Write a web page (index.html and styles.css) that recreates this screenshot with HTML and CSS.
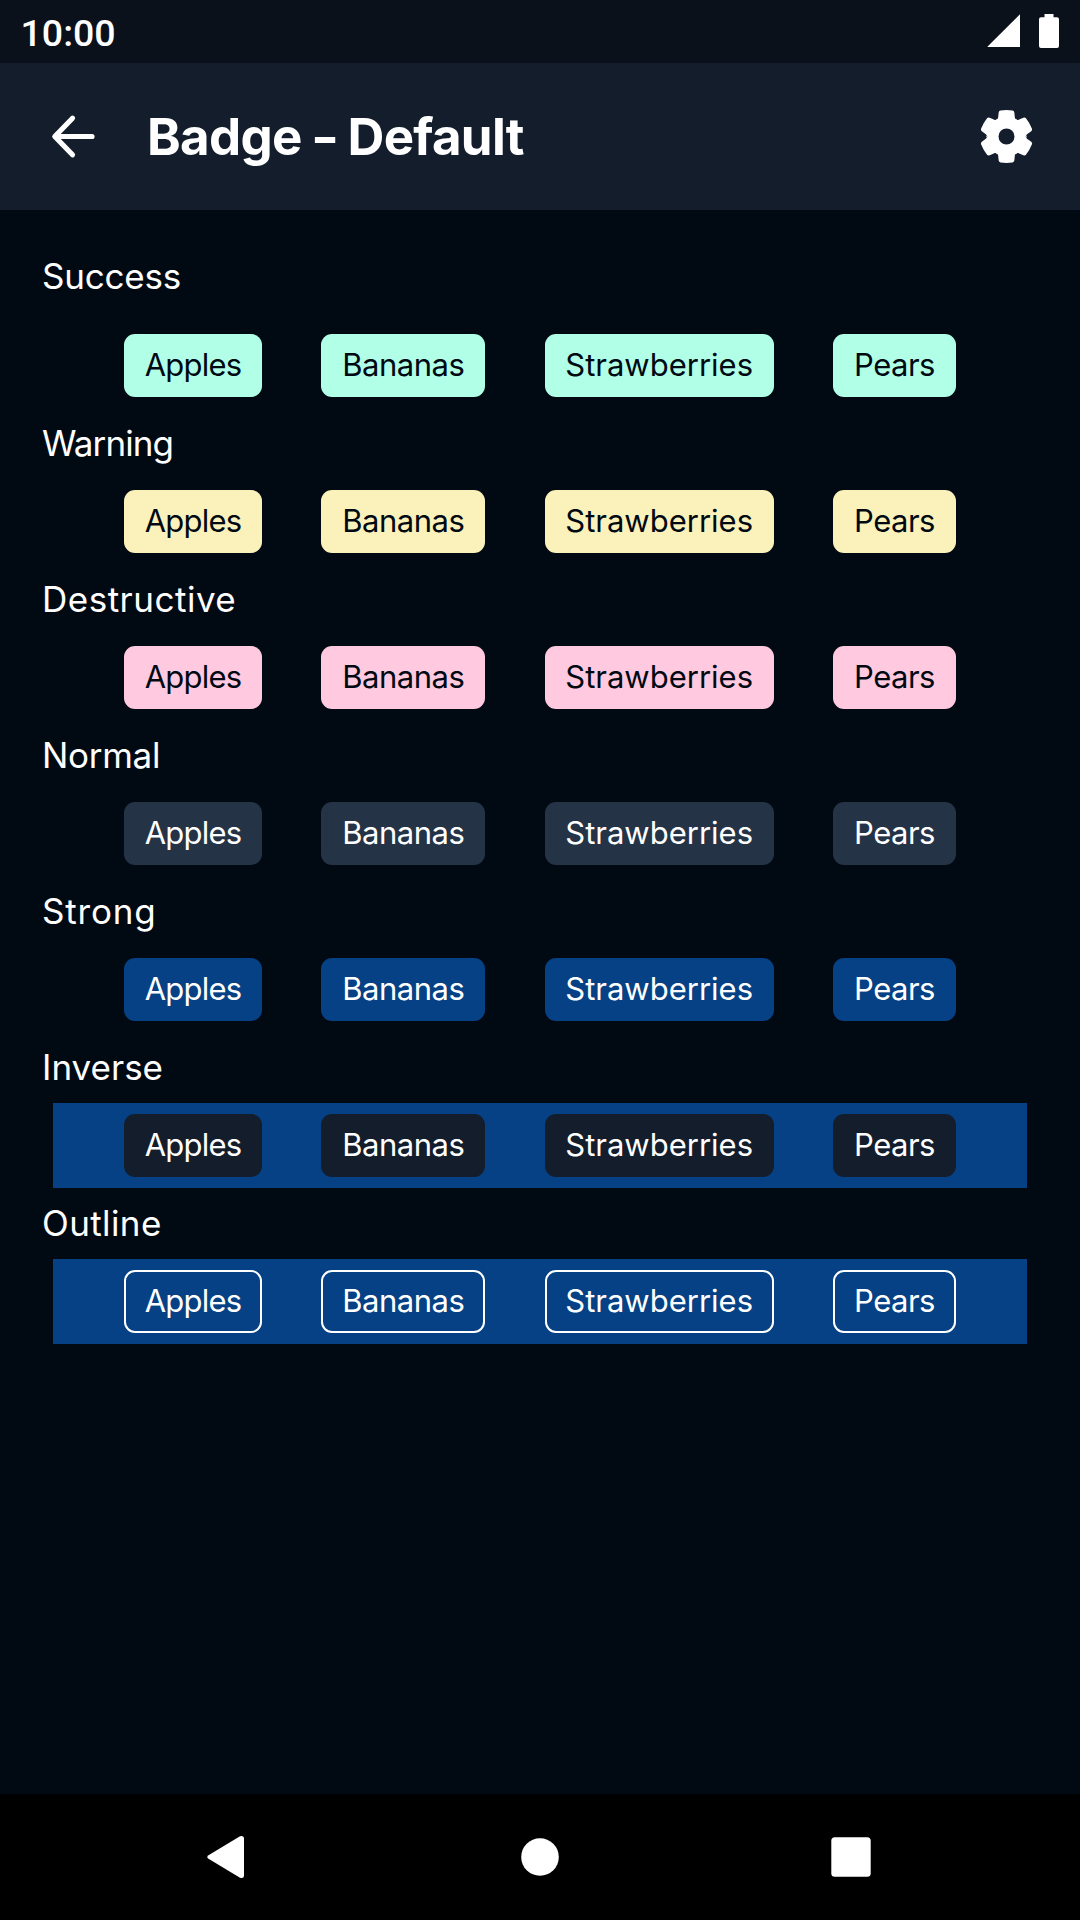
FILE: index.html
```html
<!DOCTYPE html>
<html lang="en">
<head>
<meta charset="utf-8">
<title>Badge - Default</title>
<link rel="stylesheet" href="styles.css">
</head>
<body>
<div class="status">
  <span class="time">10:00</span>
  <svg class="status-icons" width="72" height="36" viewBox="0 0 72 36"><path d="M.6 33V32.500L33 .3V33z"/><path d="M57.500 0h9v3.200h3.500q2 0 2 2v26.800q0 2-2 2h-16q-2 0-2-2V5.200q0-2 2-2h3.500z"/></svg>
</div>
<header class="appbar">
  <svg class="back" width="44" height="44" viewBox="0 0 44 44"><path d="M41 21.500H4M21.500 3.200L3.800 21.500l17.700 18.300"/></svg>
  <h1 class="title">Badge <span class="dash">-</span> Default</h1>
  <svg class="gear" width="54" height="54" viewBox="-82.5 -79.5 162 162">
    <defs><path id="tooth" d="M-22 -38L-30.750 -53.300C-26 -50.500 -24.800 -55 -24.500 -62L-23.500 -72Q-22.500 -77 -18 -77.800Q0 -80.500 18 -77.800Q22.500 -77 23.500 -72L24.500 -62C24.800 -55 26 -50.500 30.750 -53.300L22 -38z"/></defs>
    <circle class="ring" r="40"/>
    <use href="#tooth"/><use href="#tooth" transform="rotate(60)"/><use href="#tooth" transform="rotate(120)"/><use href="#tooth" transform="rotate(180)"/><use href="#tooth" transform="rotate(240)"/><use href="#tooth" transform="rotate(300)"/>
  </svg>
</header>
<main class="content">
  <h2 class="label label-first l-success">Success</h2>
  <div class="row success"><span class="badge apples">Apples</span><span class="badge bananas">Bananas</span><span class="badge strawberries">Strawberries</span><span class="badge pears">Pears</span></div>
  <h2 class="label l-warning">Warning</h2>
  <div class="row warning"><span class="badge apples">Apples</span><span class="badge bananas">Bananas</span><span class="badge strawberries">Strawberries</span><span class="badge pears">Pears</span></div>
  <h2 class="label l-destructive">Destructive</h2>
  <div class="row destructive"><span class="badge apples">Apples</span><span class="badge bananas">Bananas</span><span class="badge strawberries">Strawberries</span><span class="badge pears">Pears</span></div>
  <h2 class="label l-normal">Normal</h2>
  <div class="row normal"><span class="badge apples">Apples</span><span class="badge bananas">Bananas</span><span class="badge strawberries">Strawberries</span><span class="badge pears">Pears</span></div>
  <h2 class="label l-strong">Strong</h2>
  <div class="row strong"><span class="badge apples">Apples</span><span class="badge bananas">Bananas</span><span class="badge strawberries">Strawberries</span><span class="badge pears">Pears</span></div>
  <h2 class="label">Inverse</h2>
  <div class="row inverse"><span class="badge apples">Apples</span><span class="badge bananas">Bananas</span><span class="badge strawberries">Strawberries</span><span class="badge pears">Pears</span></div>
  <h2 class="label l-outline">Outline</h2>
  <div class="row outline"><span class="badge apples">Apples</span><span class="badge bananas">Bananas</span><span class="badge strawberries">Strawberries</span><span class="badge pears">Pears</span></div>
</main>
<nav class="navbar">
  <svg width="38" height="44" viewBox="0 0 38 44"><path d="M1.500 20.200L33 1.300Q37 0 37 3.500V40.500Q37 44 33 42.700L1.500 23.800Q-1 22 1.500 20.200z"/></svg>
  <svg class="home" width="38" height="38" viewBox="0 0 38 38"><circle cx="19" cy="19" r="18.800"/></svg>
  <svg width="40" height="40" viewBox="0 0 40 40"><rect x=".3" y=".3" width="39.400" height="39.400" rx="3.500"/></svg>
</nav>
</body>
</html>
```
FILE: styles.css
```css
* { box-sizing: border-box; }
body {
  margin: 0;
  width: 1080px;
  height: 1920px;
  display: flex;
  flex-direction: column;
  overflow: hidden;
  background: #010913;
  color: #fff;
  font-family: Inter, "Liberation Sans", sans-serif;
}
svg { display: block; fill: #fff; overflow: visible; }
.status {
  height: 63px;
  padding: 0 21px 0 20.5px;
  display: flex;
  justify-content: space-between;
  background: #0a111a;
}
.time { font: 500 37.5px/66px Roboto, sans-serif; }
.status-icons { margin-top: 14px; }
.appbar {
  height: 147px;
  padding: 0 47px 0 51px;
  display: flex;
  align-items: center;
  background: #141d2b;
}
.back { fill: none; stroke: #fff; stroke-width: 5.2; stroke-linecap: round; stroke-linejoin: round; }
.title { margin: 0 auto 0 52px; font-size: 51px; font-weight: 700; line-height: 66px; letter-spacing: -0.7px; }
.dash { display: inline-block; transform: scaleX(1.2); }
.ring { fill: none; stroke: #fff; stroke-width: 32; }
.content { flex: 1; padding: 31px 53px 0; }
.label {
  height: 71px;
  margin: 0 0 0 -11px;
  font-size: 35px;
  font-weight: 400;
  line-height: 71px;
}
.label-first { height: 82px; }
.l-success { letter-spacing: -0.2px; }
.l-warning { letter-spacing: -0.9px; }
.l-destructive { letter-spacing: 0.5px; }
.l-normal { letter-spacing: -0.3px; }
.l-strong { letter-spacing: 0.8px; }
.l-outline { letter-spacing: 0.4px; }
.row {
  height: 85px;
  padding: 0 71px;
  display: flex;
  align-items: center;
  justify-content: space-between;
}
.badge {
  height: 63px;
  border-radius: 11px;
  font-size: 31px;
  line-height: 62px;
  text-align: center;
  white-space: nowrap;
}
.apples { width: 138px; letter-spacing: -0.8px; }
.bananas { width: 164px; letter-spacing: -0.5px; }
.strawberries { width: 229px; }
.pears { width: 123px; letter-spacing: -0.5px; }
.success .badge { background: #b1ffe7; color: #010913; }
.warning .badge { background: #fbf1bb; color: #010913; }
.destructive .badge { background: #ffc9df; color: #010913; }
.normal .badge { background: #243346; }
.strong .badge { background: #054184; }
.inverse, .outline { background: #054184; }
.inverse .badge { background: #141d2b; }
.outline .badge { border: 2px solid #fff; line-height: 58px; }
.navbar {
  height: 126px;
  padding: 0 209px 0 207px;
  display: flex;
  align-items: center;
  justify-content: space-between;
  background: #000;
}
.home { margin-left: 4px; }
```
